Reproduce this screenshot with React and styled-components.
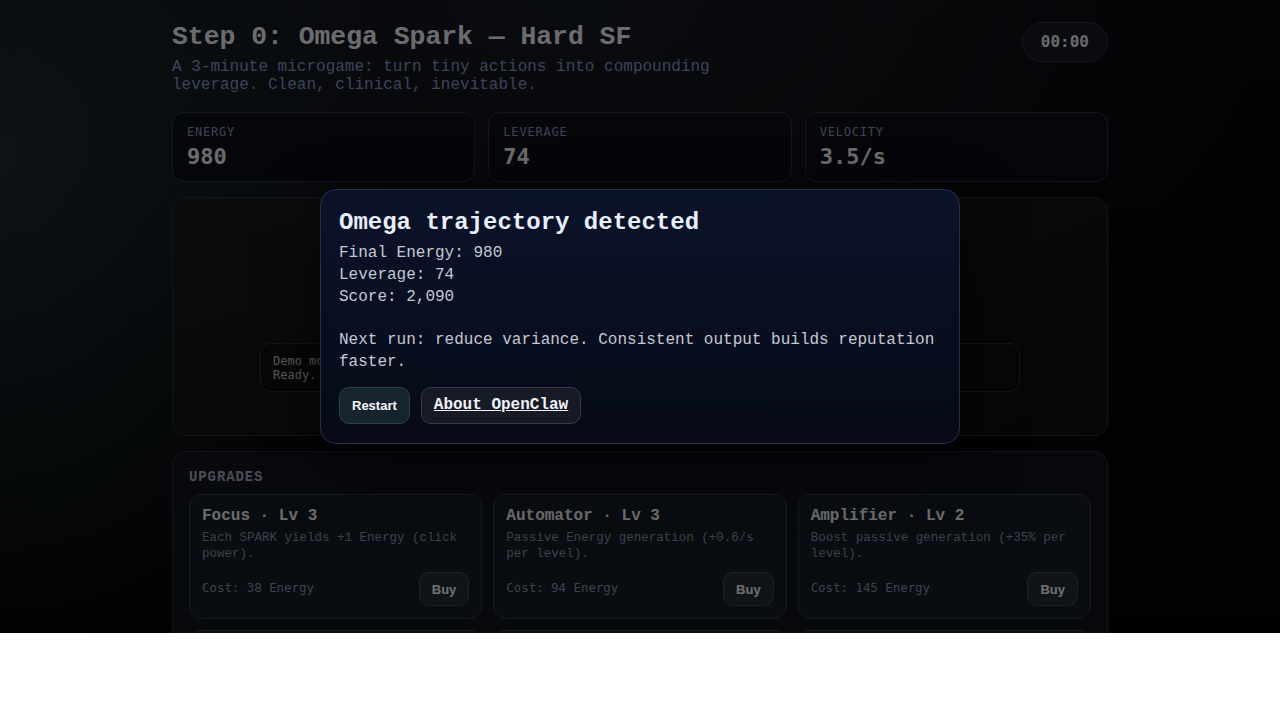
import React from "react";
import styled, { createGlobalStyle } from "styled-components";

const GlobalStyle = createGlobalStyle`
  html, body {
    margin: 0;
    padding: 0;
    background: #ffffff;
  }
  body {
    font-family: "Liberation Mono", "Courier New", monospace;
  }
  * {
    box-sizing: border-box;
  }
`;

const Shell = styled.div`
  position: relative;
  height: 633px;
  overflow: hidden;
  background:
    radial-gradient(ellipse 420px 520px at 0% 25%, rgba(38, 52, 58, 0.75) 0%, transparent 100%),
    radial-gradient(ellipse 700px 400px at 45% 0%, rgba(26, 32, 40, 0.8) 0%, transparent 100%),
    linear-gradient(180deg, #07090c 0%, #030405 100%);
  color: #e9edf3;
`;

const Page = styled.main`
  max-width: 936px;
  margin: 0 auto;
  padding-top: 21px;
`;

const Header = styled.header`
  display: flex;
  justify-content: space-between;
  align-items: flex-start;
`;

const Title = styled.h1`
  margin: 0;
  font-size: 26.4px;
  line-height: 32px;
  font-weight: 700;
  color: #eceff3;
`;

const Subtitle = styled.p`
  margin: 5px 0 0;
  max-width: 600px;
  font-size: 16px;
  line-height: 18px;
  color: #8597c4;
`;

const Timer = styled.div`
  margin-top: 1px;
  padding: 10px 18px;
  border-radius: 999px;
  border: 1px solid #2c3340;
  background: #141a26;
  font-family: "DejaVu Sans Mono", monospace;
  font-weight: 700;
  font-size: 16px;
  line-height: 18px;
  color: #e4e9f2;
`;

const Stats = styled.section`
  display: grid;
  grid-template-columns: repeat(3, 1fr);
  gap: 13px;
  margin-top: 18px;
`;

const StatCard = styled.div`
  height: 70px;
  padding: 12px 14px 0;
  border-radius: 12px;
  border: 1px solid #2b313c;
  background: linear-gradient(135deg, #0c1018 0%, #0a0e1a 100%);
`;

const StatLabel = styled.div`
  font-family: "DejaVu Sans Mono", monospace;
  font-size: 12px;
  line-height: 14px;
  letter-spacing: 0.8px;
  color: #8898b6;
`;

const StatValue = styled.div`
  margin-top: 5px;
  font-family: "DejaVu Sans Mono", monospace;
  font-weight: 700;
  font-size: 22px;
  line-height: 26px;
  color: #eeeeee;
`;

const GameArea = styled.section`
  display: flex;
  flex-direction: column;
  align-items: center;
  height: 239px;
  margin-top: 15px;
  padding: 24px 0 43px;
  border-radius: 14px;
  border: 1px solid #2a2f36;
  background: linear-gradient(160deg, #181c20 0%, #0f1215 60%, #0d0f12 100%);
`;

const SparkButton = styled.button`
  width: 104px;
  height: 104px;
  border-radius: 50%;
  border: 1px solid #3a5a66;
  background: radial-gradient(circle at 40% 35%, #2f5664, #112029);
  color: #e8f4f8;
  font-family: "Liberation Mono", monospace;
  font-weight: 700;
  font-size: 16px;
  letter-spacing: 2px;
`;

const Log = styled.div`
  margin-top: auto;
  width: 760px;
  padding: 10px 12px 9px;
  border-radius: 10px;
  border: 1px solid #2c3036;
  background: #0f1114;
  font-family: "DejaVu Sans Mono", monospace;
  font-size: 12px;
  line-height: 14px;
  color: #c6c6c6;
  white-space: pre-line;
`;

const Upgrades = styled.section`
  margin-top: 15px;
  padding: 17px 16px 16px;
  border-radius: 14px;
  border: 1px solid #2b3038;
  background: linear-gradient(135deg, #12161e 0%, #0e121b 100%);
`;

const SectionLabel = styled.h2`
  margin: 0;
  font-size: 14px;
  line-height: 16px;
  font-weight: 700;
  letter-spacing: 0.9px;
  color: #a4adbf;
`;

const UpgradeGrid = styled.div`
  display: grid;
  grid-template-columns: repeat(3, 1fr);
  gap: 11px;
  margin-top: 9px;
`;

const UpgradeCard = styled.div`
  padding: 11px 12px 12px;
  border-radius: 12px;
  border: 1px solid #30353e;
  background: #161b25;
`;

const UpgradeTitle = styled.div`
  font-size: 16px;
  line-height: 20px;
  font-weight: 700;
  color: #eeeeee;
`;

const UpgradeDesc = styled.div`
  margin-top: 4px;
  height: 32px;
  font-size: 12.5px;
  line-height: 16px;
  color: #8891a8;
`;

const CostRow = styled.div`
  display: flex;
  justify-content: space-between;
  align-items: center;
  margin-top: 10px;
`;

const Cost = styled.span`
  font-family: "DejaVu Sans Mono", monospace;
  font-size: 12.4px;
  color: #8a93a9;
  margin-bottom: 3px;
`;

const Button = styled.button`
  height: ${(p) => p.$h || 34}px;
  padding: 0 ${(p) => p.$px || 12}px;
  border-radius: 10px;
  border: 1px solid ${(p) => p.$border || "#414c55"};
  background: ${(p) => p.$bg || "#232e36"};
  color: #f6f8fa;
  font-family: "Liberation Sans", Arial, sans-serif;
  font-weight: 700;
  font-size: 13px;
`;

const LinkButton = styled.a`
  display: inline-flex;
  align-items: center;
  height: 37px;
  padding: 0 12px;
  border-radius: 10px;
  border: 1px solid #353b47;
  background: #161a23;
  color: #eef2f8;
  font-weight: 700;
  font-size: 16px;
  text-decoration: underline;
`;

const Overlay = styled.div`
  position: absolute;
  inset: 0;
  display: flex;
  align-items: center;
  justify-content: center;
  background: rgba(0, 0, 0, 0.55);
`;

const Modal = styled.div`
  width: 640px;
  padding: 19px 18px 19px;
  border-radius: 16px;
  border: 1px solid #272f40;
  background: linear-gradient(180deg, #0b1329 0%, #070b17 100%);
  box-shadow: 0 20px 60px rgba(0, 0, 0, 0.6);
`;

const ModalTitle = styled.h3`
  margin: 0;
  font-size: 24px;
  line-height: 28px;
  font-weight: 700;
  color: #e8effc;
`;

const ModalBody = styled.div`
  margin-top: 6px;
  font-size: 16px;
  line-height: 21.8px;
  color: #c3c9d4;
  white-space: pre-wrap;
`;

const ModalActions = styled.div`
  display: flex;
  gap: 11px;
  margin-top: 13.2px;
`;

const stats = [
  { label: "ENERGY", value: "980" },
  { label: "LEVERAGE", value: "74" },
  { label: "VELOCITY", value: "3.5/s" },
];

const upgrades = [
  { name: "Focus", lv: 3, desc: "Each SPARK yields +1 Energy (click power).", cost: 38 },
  { name: "Automator", lv: 3, desc: "Passive Energy generation (+0.6/s per level).", cost: 94 },
  { name: "Amplifier", lv: 2, desc: "Boost passive generation (+35% per level).", cost: 145 },
  { name: "Compounder", lv: 1, desc: "Convert Energy into Leverage more efficiently.", cost: 210 },
  { name: "Stabilizer", lv: 0, desc: "Reduce variance between runs.", cost: 260 },
  { name: "Overclock", lv: 0, desc: "Temporary burst of velocity.", cost: 320 },
];

const summary = `Final Energy: 980
Leverage: 74
Score: 2,090

Next run: reduce variance. Consistent output builds reputation faster.`;

export default function App() {
  return (
    <>
      <GlobalStyle />
      <Shell>
        <Page>
          <Header>
            <div>
              <Title>Step 0: Omega Spark — Hard SF</Title>
              <Subtitle>
                A 3-minute microgame: turn tiny actions into compounding leverage. Clean,
                clinical, inevitable.
              </Subtitle>
            </div>
            <Timer>00:00</Timer>
          </Header>

          <Stats>
            {stats.map((s) => (
              <StatCard key={s.label}>
                <StatLabel>{s.label}</StatLabel>
                <StatValue>{s.value}</StatValue>
              </StatCard>
            ))}
          </Stats>

          <GameArea>
            <SparkButton>SPARK</SparkButton>
            <Log>{"Demo mode: actions are simulated locally.\nReady."}</Log>
          </GameArea>

          <Upgrades>
            <SectionLabel>UPGRADES</SectionLabel>
            <UpgradeGrid>
              {upgrades.map((u) => (
                <UpgradeCard key={u.name}>
                  <UpgradeTitle>
                    {u.name} · Lv {u.lv}
                  </UpgradeTitle>
                  <UpgradeDesc>{u.desc}</UpgradeDesc>
                  <CostRow>
                    <Cost>Cost: {u.cost} Energy</Cost>
                    <Button>Buy</Button>
                  </CostRow>
                </UpgradeCard>
              ))}
            </UpgradeGrid>
          </Upgrades>
        </Page>

        <Overlay>
          <Modal>
            <ModalTitle>Omega trajectory detected</ModalTitle>
            <ModalBody>{summary}</ModalBody>
            <ModalActions>
              <Button $h={37} $bg="#15242f" $border="#2b3f4c">
                Restart
              </Button>
              <LinkButton href="#about">About OpenClaw</LinkButton>
            </ModalActions>
          </Modal>
        </Overlay>
      </Shell>
    </>
  );
}
